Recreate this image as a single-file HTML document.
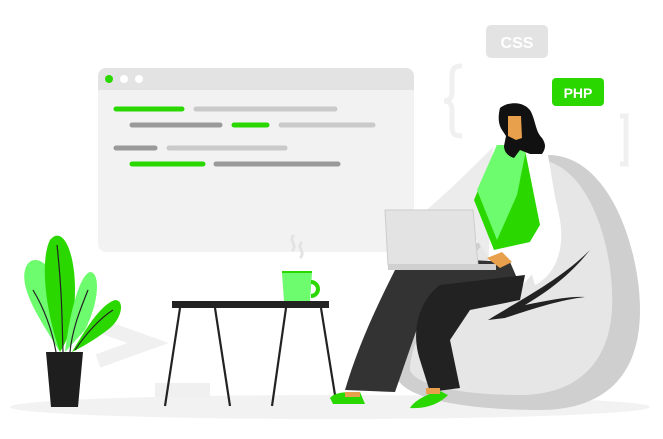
<!DOCTYPE html>
<html><head><style>html,body{margin:0;padding:0;background:#fff;overflow:hidden}svg{display:block}</style></head>
<body>
<svg width="663" height="439" viewBox="0 0 663 439" xmlns="http://www.w3.org/2000/svg">
<ellipse cx="330" cy="407" rx="320" ry="12" fill="#f2f2f2"/>
<rect x="98" y="68" width="316" height="184" rx="8" fill="#f2f2f2"/>
<path d="M106 68h300a8 8 0 0 1 8 8v14H98V76a8 8 0 0 1 8-8z" fill="#e3e3e3"/>
<circle cx="109" cy="79" r="4" fill="#2ad800"/><circle cx="124" cy="79" r="4" fill="#fff"/><circle cx="139" cy="79" r="4" fill="#fff"/>
<g stroke-linecap="round" stroke-width="5">
<line x1="116" y1="109" x2="182" y2="109" stroke="#2ad800"/><line x1="196" y1="109" x2="335" y2="109" stroke="#cacaca"/>
<line x1="132" y1="125" x2="220" y2="125" stroke="#9a9a9a"/><line x1="234" y1="125" x2="267" y2="125" stroke="#2ad800"/><line x1="281" y1="125" x2="373" y2="125" stroke="#cacaca"/>
<line x1="116" y1="148" x2="155" y2="148" stroke="#9a9a9a"/><line x1="169" y1="148" x2="285" y2="148" stroke="#cacaca"/>
<line x1="132" y1="164" x2="203" y2="164" stroke="#2ad800"/><line x1="216" y1="164" x2="338" y2="164" stroke="#9a9a9a"/>
</g>
<rect x="486" y="25" width="62" height="33" rx="5" fill="#e3e3e3"/>
<text x="517" y="48" font-family="Liberation Sans,sans-serif" font-weight="bold" font-size="16" fill="#fff" text-anchor="middle">CSS</text>
<rect x="552" y="78" width="52" height="28" rx="4" fill="#2ad800"/>
<text x="578" y="98" font-family="Liberation Sans,sans-serif" font-weight="bold" font-size="14" fill="#fff" text-anchor="middle">PHP</text>
<path d="M462 66c-10 0-10 4-10 14v12c0 6-3 9-8 9 5 0 8 3 8 9v12c0 10 0 14 10 14" stroke="#f0f0f0" stroke-width="5" fill="none"/>
<path d="M620 116h6v48h-6" stroke="#f0f0f0" stroke-width="5" fill="none"/>
<path d="M98 325l50 18-50 18" stroke="#f0f0f0" stroke-width="14" fill="none"/>
<rect x="155" y="383" width="55" height="14" fill="#f0f0f0"/>
<path d="M60 352C40 320 20 290 25 270 30 250 55 260 62 300z" fill="#6dfc6d"/>
<path d="M60 352C45 310 40 260 50 240 62 225 75 250 75 290 75 320 68 340 60 352z" fill="#2ad800"/>
<path d="M65 352C70 310 80 275 90 272 100 272 100 300 85 330z" fill="#6dfc6d"/>
<path d="M72 352C85 330 100 305 115 300 125 300 122 318 110 328 95 340 80 348 72 352z" fill="#2ad800"/>
<g stroke="#222" stroke-width="1.2" fill="none"><path d="M57 245C62 290 62 320 63 352"/><path d="M33 290C45 310 52 330 56 352"/><path d="M88 290C80 310 72 330 70 352"/><path d="M113 310C100 318 85 335 75 350"/></g>
<path d="M46 352h37l-5 55h-27z" fill="#1e1e1e"/>
<rect x="172" y="301" width="157" height="7" fill="#222"/>
<g stroke="#222" stroke-width="2.2"><line x1="180" y1="308" x2="165" y2="406"/><line x1="215" y1="308" x2="230" y2="406"/><line x1="286" y1="308" x2="272" y2="406"/><line x1="321" y1="308" x2="335" y2="395"/></g>
<path d="M282 273h30l-2 28h-26z" fill="#6dfc6d"/><path d="M282 272h30" stroke="#2ad800" stroke-width="2"/>
<path d="M311 282a6 6 0 1 1 0 14" stroke="#2ad800" stroke-width="4" fill="none"/>
<path d="M293 236c-4 5 4 8 0 14M301 243c-4 5 4 8 0 14" stroke="#e3e3e3" stroke-width="3" fill="none" stroke-linecap="round"/>
<path d="M548 155C610 155 640 250 640 310 640 380 600 410 540 410 470 410 410 400 398 380 390 330 450 270 490 230 520 190 525 155 548 155z" fill="#cfcfcf"/>
<path d="M540 160C590 165 615 250 612 310 608 370 570 395 520 395 460 395 415 385 410 370 410 330 460 270 495 230 515 190 520 160 540 160z" fill="#e6e6e6"/>
<path d="M488 320C520 300 560 280 590 250 570 275 550 290 525 305 550 300 570 296 585 297 560 300 535 308 505 318z" fill="#222"/>
<path d="M495 145C470 170 440 200 420 215L470 230 490 260z" fill="#ececec"/>
<path d="M493 145h30l25 10 10 60-10 40-25 30-35-10z" fill="#fff"/>
<path d="M497 145h30l17 50-5 45-45 10-20-50z" fill="#2ad800"/>
<path d="M497 145h30l-10 50-20 45-20-50z" fill="#6dfc6d"/>
<path d="M525 150C545 160 555 190 560 220 565 250 555 275 535 285L525 250 540 225z" fill="#fff"/>
<path d="M395 270C380 300 360 340 345 390L395 392 420 320 445 305C470 300 500 295 520 285L510 262 470 260z" fill="#333"/>
<path d="M440 285C420 300 410 330 420 360L430 392 460 388 450 340 470 310 520 300 525 275z" fill="#222"/>
<path d="M385 210h88l5 55h-90z" fill="#e3e3e3" stroke="#ccc"/>
<rect x="388" y="264" width="108" height="6" fill="#d0d0d0"/>
<path d="M487 258l15-6 10 10-12 6z" fill="#e8a04c"/>
<path d="M330 398c5-6 15-6 30-6l5 12h-32z" fill="#2ad800"/><path d="M345 392h15v5h-15z" fill="#e8a04c"/>
<path d="M410 408c5-8 15-12 28-18l10 5c-8 8-20 14-38 13z" fill="#2ad800"/><path d="M426 388h14v6h-14z" fill="#e8a04c"/>
<path d="M500 108c10-8 28-6 32 6 4 10 4 18 10 24 4 6 4 10 0 16l-12 0-10-4-6 8c-6-2-10-6-10-12l2-10-4-6c-4-6-4-14-2-22z" fill="#111"/>
<path d="M508 116h13l1 22-6 2-8-4z" fill="#e8a04c"/>
</svg>
</body></html>
